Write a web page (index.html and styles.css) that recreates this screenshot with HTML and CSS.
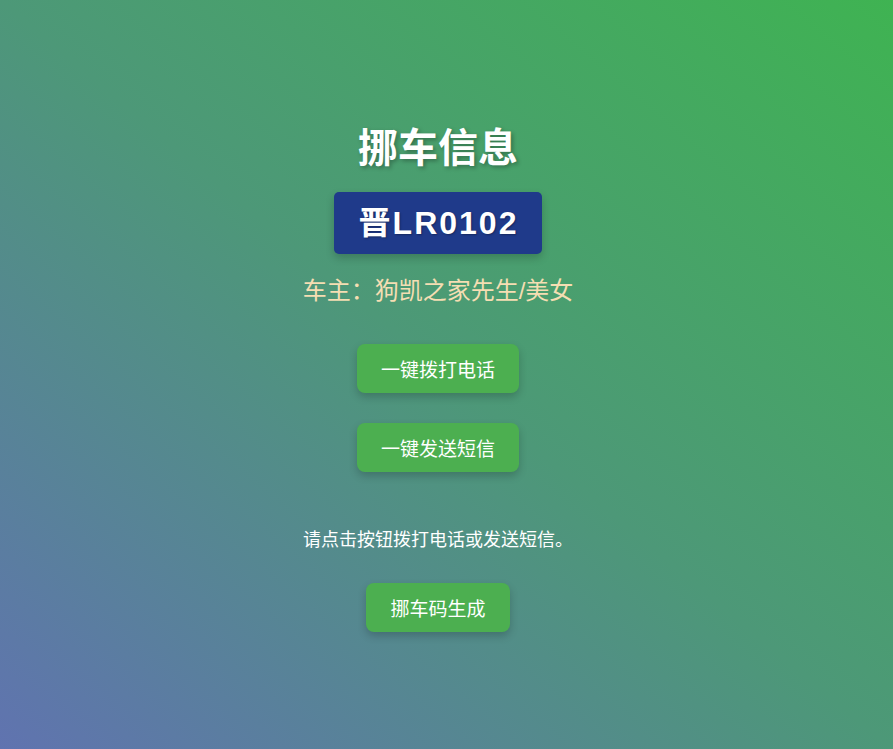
FILE: index.html
```html
<!DOCTYPE html>
<html lang="zh-CN">
<head>
<meta charset="utf-8">
<title>挪车信息</title>
<link rel="stylesheet" href="styles.css">
</head>
<body>
<main class="page">
  <h1 class="title">挪车信息</h1>
  <div class="plate">晋<span class="plate-num">LR0102</span></div>
  <p class="owner">车主：狗凯之家先生/美女</p>
  <button class="btn btn-call">一键拨打电话</button>
  <button class="btn btn-sms">一键发送短信</button>
  <p class="hint">请点击按钮拨打电话或发送短信。</p>
  <button class="btn btn-gen">挪车码生成</button>
</main>
</body>
</html>
```

FILE: styles.css
```css
html, body {
  margin: 0;
  padding: 0;
  height: 100%;
}
body {
  background: linear-gradient(to top right, #6073b0 0%, #4d9878 50%, #3fb352 100%);
  font-family: "Liberation Sans", "Noto Sans CJK SC", sans-serif;
  color: #fff;
  overflow: hidden;
}
.page {
  display: flex;
  flex-direction: column;
  align-items: center;
  padding-top: 124px;
  padding-right: 17px;
}
.title {
  margin: 0;
  font-size: 40px;
  line-height: 48px;
  font-weight: bold;
  text-shadow: 2px 2px 4px rgba(0, 0, 0, 0.3);
}
.plate {
  margin-top: 20px;
  background: #1f3a8a;
  border-radius: 5px;
  padding: 10px 24px 10px 25px;
  font-size: 32px;
  line-height: 42px;
  font-weight: bold;
  letter-spacing: 2px;
  box-shadow: 0 4px 8px rgba(0, 0, 0, 0.2);
  text-shadow: 1px 1px 2px rgba(0, 0, 0, 0.3);
}
.plate-num {
  font-family: "Liberation Sans", sans-serif;
}
.owner {
  margin: 21px 0 0;
  font-size: 24px;
  line-height: 32px;
  color: #f5deb3;
}
.btn {
  border: none;
  background: #4caf50;
  color: #fff;
  font-family: "Noto Sans CJK SC", sans-serif;
  font-size: 19px;
  line-height: 49px;
  height: 49px;
  padding: 0 24px;
  border-radius: 8px;
  box-shadow: 0 4px 8px rgba(0, 0, 0, 0.2);
  cursor: pointer;
}
.btn-call {
  margin-top: 37px;
}
.btn-sms {
  margin-top: 30px;
}
.hint {
  margin: 55px 0 0;
  font-size: 18px;
  line-height: 26px;
}
.btn-gen {
  margin-top: 30px;
}
```
